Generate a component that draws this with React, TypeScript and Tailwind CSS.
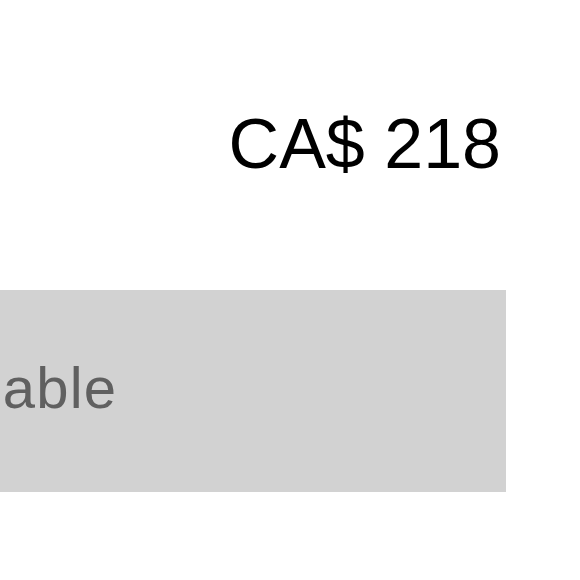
export default function App() {
  return (
    <div
      className="w-[580px] h-[580px] bg-white overflow-hidden"
      style={{ fontFamily: '"Liberation Sans", Arial, sans-serif' }}
    >
      <div className="w-[506px] flex flex-col">
        <div className="mt-[109px] flex justify-end pr-[5px]">
          <span className="text-[70px] leading-none text-black">CA$ 218</span>
        </div>
        <div className="mt-[111px] h-[202px] bg-[#d2d2d2] pt-[69px] overflow-hidden">
          <div className="-ml-[199px] text-[58px] leading-[57px] tracking-[1.2px] text-[#606060] whitespace-nowrap">
            Unavailable
          </div>
        </div>
      </div>
    </div>
  );
}
